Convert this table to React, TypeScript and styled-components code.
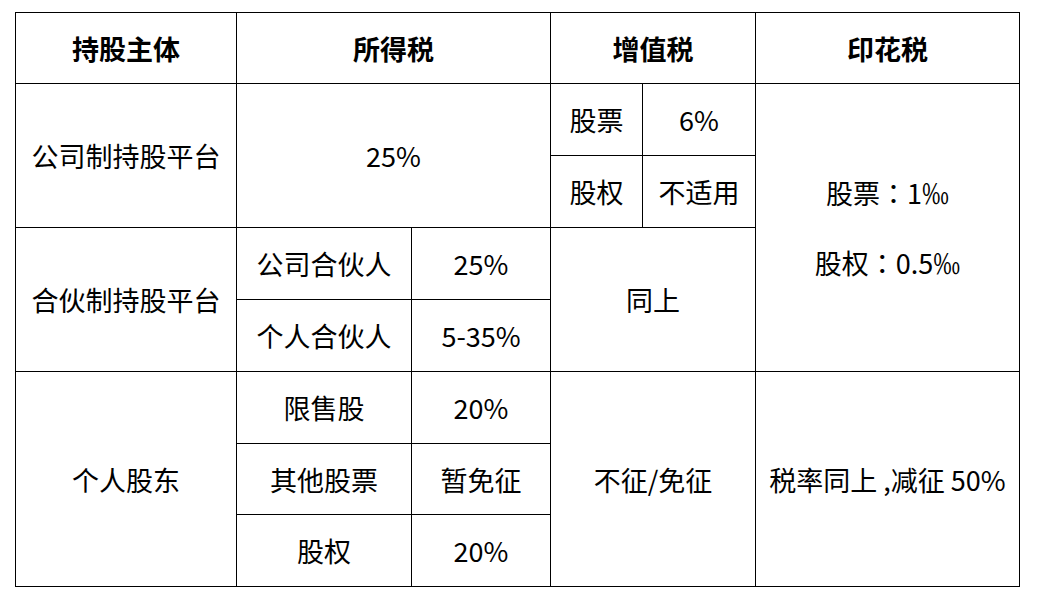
import React from "react";
import styled, { createGlobalStyle } from "styled-components";

const Global = createGlobalStyle`
  html, body { margin: 0; padding: 0; background: #fff; }
  body { font-family: "Noto Sans CJK SC", "Noto Sans", sans-serif; color: #000; }
`;

const Page = styled.div`
  padding: 12px 0 0 15px;
`;

const Table = styled.table`
  border-collapse: collapse;
  table-layout: fixed;
  width: 1004px;
  font-size: 27px;
  line-height: 35px;
`;

const Row = styled.tr<{ $h: number }>`
  height: ${(p) => p.$h}px;
`;

const Th = styled.th`
  border: 1px solid #000;
  font-weight: 700;
  text-align: center;
  vertical-align: middle;
  padding: 0;
`;

const Td = styled.td`
  border: 1px solid #000;
  font-weight: 400;
  text-align: center;
  vertical-align: middle;
  padding: 0;
  white-space: nowrap;
`;

const Blank = styled.div`
  height: 35px;
`;

const Colon = styled.span`
  font-family: "Noto Sans CJK TC", "Noto Sans CJK SC", sans-serif;
`;

const widths = [221, 175, 139, 92, 113, 264];

export default function App() {
  return (
    <>
      <Global />
      <Page>
        <Table>
          <colgroup>
            {widths.map((w, i) => (
              <col key={i} style={{ width: w }} />
            ))}
          </colgroup>
          <thead>
            <Row $h={71}>
              <Th>持股主体</Th>
              <Th colSpan={2}>所得税</Th>
              <Th colSpan={2}>增值税</Th>
              <Th>印花税</Th>
            </Row>
          </thead>
          <tbody>
            <Row $h={72}>
              <Td rowSpan={2}>公司制持股平台</Td>
              <Td colSpan={2} rowSpan={2}>25%</Td>
              <Td>股票</Td>
              <Td>6%</Td>
              <Td rowSpan={4}>
                <div>
                  股票<Colon>：</Colon>1‰
                </div>
                <Blank />
                <div>
                  股权<Colon>：</Colon>0.5‰
                </div>
              </Td>
            </Row>
            <Row $h={72}>
              <Td>股权</Td>
              <Td>不适用</Td>
            </Row>
            <Row $h={72}>
              <Td rowSpan={2}>合伙制持股平台</Td>
              <Td>公司合伙人</Td>
              <Td>25%</Td>
              <Td colSpan={2} rowSpan={2}>同上</Td>
            </Row>
            <Row $h={72}>
              <Td>个人合伙人</Td>
              <Td>5-35%</Td>
            </Row>
            <Row $h={72}>
              <Td rowSpan={3}>个人股东</Td>
              <Td>限售股</Td>
              <Td>20%</Td>
              <Td colSpan={2} rowSpan={3}>不征/免征</Td>
              <Td rowSpan={3}>税率同上 ,减征 50%</Td>
            </Row>
            <Row $h={71}>
              <Td>其他股票</Td>
              <Td>暂免征</Td>
            </Row>
            <Row $h={72}>
              <Td>股权</Td>
              <Td>20%</Td>
            </Row>
          </tbody>
        </Table>
      </Page>
    </>
  );
}
